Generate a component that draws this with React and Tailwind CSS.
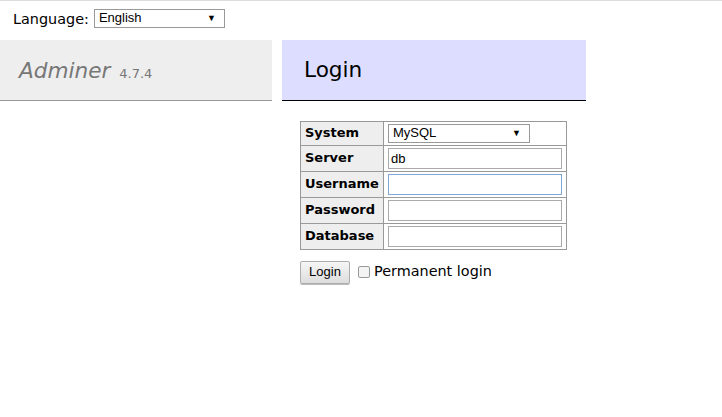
const verdana = "font-['DejaVu_Sans',Verdana,sans-serif]";

const Field = ({ label, children }) => (
  <tr>
    <th className="border-r border-b border-[#999] bg-[#eee] px-[4px] py-[2px] text-left font-bold">
      {label}
    </th>
    <td className="border-r border-b border-[#999] px-[4px] py-[2px]">{children}</td>
  </tr>
);

const TextInput = ({ focused, type = "text", value = "" }) => (
  <input
    type={type}
    defaultValue={value}
    className={
      "block h-[21px] w-[174px] border bg-white px-[2px] font-['Liberation_Sans',Arial,sans-serif] text-[13px] text-black outline-none " +
      (focused ? "border-[#7ea6d8]" : "border-[#aaa]")
    }
  />
);

const Select = ({ value, width }) => (
  <div
    className={`flex h-[19px] items-center justify-between border border-[#999] bg-white pl-[4px] pr-[8px] font-['Liberation_Sans',Arial,sans-serif] text-[13px] text-black ${width}`}
  >
    <span>{value}</span>
    <span className="text-[9px]">▼</span>
  </div>
);

export default function App() {
  return (
    <div className={`min-h-[417px] border-t border-[#ddd] bg-white text-[14.4px] leading-[1.25] text-black ${verdana}`}>
      <div className="flex h-[31px] items-center pl-[13px] pt-[4px]">
        <span className="mr-[5px]">Language:</span>
        <Select value="English" width="w-[131px]" />
      </div>

      <div className="mt-[8px] flex items-start">
        <div className="w-[272px] shrink-0">
          <h1 className="flex h-[61px] items-center border-b border-[#999] bg-[#eee] pl-[19px] pt-[2px] text-[21.6px] font-normal italic text-[#777]">
            <span>
              Adminer <span className="ml-[2px] text-[13px] not-italic">4.7.4</span>
            </span>
          </h1>
        </div>

        <div className="ml-[10px] flex flex-col">
          <h2 className="flex h-[61px] w-[304px] items-center border-b border-black bg-[#ddf] pl-[22px] text-[21.6px] font-normal text-black">
            Login
          </h2>

          <table className="ml-[18px] mt-[20px] w-[266px] border-collapse border-t border-l border-[#999] text-[13px]">
            <tbody>
              <Field label="System">
                <Select value="MySQL" width="w-[142px]" />
              </Field>
              <Field label="Server">
                <TextInput value="db" />
              </Field>
              <Field label="Username">
                <TextInput focused />
              </Field>
              <Field label="Password">
                <TextInput type="password" />
              </Field>
              <Field label="Database">
                <TextInput />
              </Field>
            </tbody>
          </table>

          <div className="ml-[18px] mt-[11px] flex items-center">
            <button className="h-[23px] w-[50px] rounded-[2px] border border-[#adadad] bg-gradient-to-b from-[#f6f6f6] to-[#dddddd] font-['Liberation_Sans',Arial,sans-serif] text-[13px] text-black shadow-[0_1px_0_#bbb]">
              Login
            </button>
            <label className="ml-[8px] flex items-center pb-[3px] text-[14.4px]">
              <span className="mr-[4px] mt-[2px] inline-block h-[12px] w-[12px] rounded-[2px] border border-[#999] bg-[#f4f4f4]" />
              Permanent login
            </label>
          </div>
        </div>
      </div>
    </div>
  );
}
